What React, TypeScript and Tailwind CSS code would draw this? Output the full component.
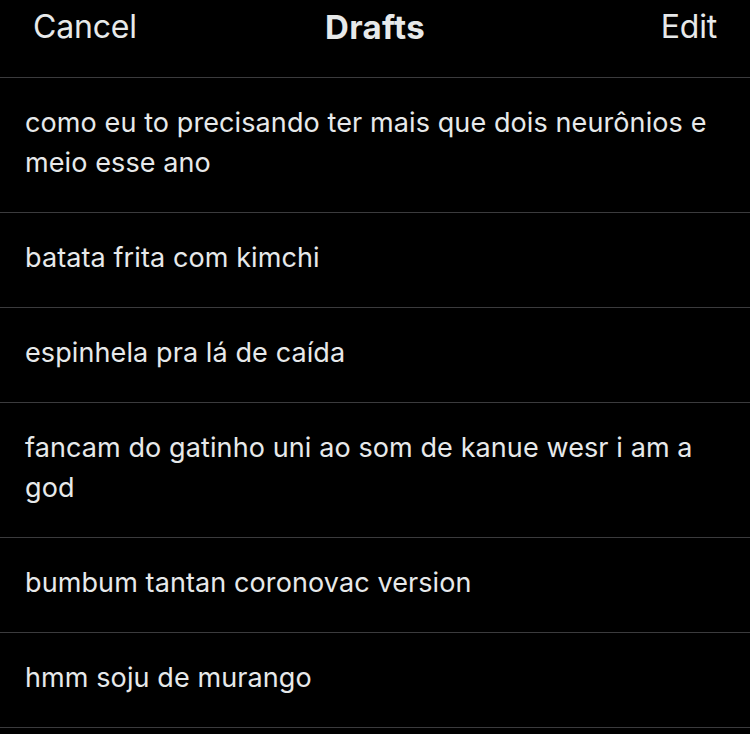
import React from 'react';

const drafts = [
  'como eu to precisando ter mais que dois neurônios e meio esse ano',
  'batata frita com kimchi',
  'espinhela pra lá de caída',
  'fancam do gatinho uni ao som de kanue wesr i am a god',
  'bumbum tantan coronovac version',
  'hmm soju de murango',
];

export default function App() {
  return (
    <div
      className="min-h-[734px] w-[750px] overflow-hidden bg-black text-[#e7e9ea]"
      style={{ fontFamily: 'Inter, "Noto Sans", sans-serif' }}
    >
      {/* Header */}
      <div className="grid h-[78px] grid-cols-3 items-start border-b border-[#3b3b3d] px-[33px] pt-[6px]">
        <span className="text-[32px] leading-[42px] tracking-[-0.2px]">Cancel</span>
        <span className="text-center text-[33px] font-bold leading-[42px] tracking-[0.3px]">Drafts</span>
        <span className="text-right text-[32px] leading-[42px] tracking-[-0.2px]">Edit</span>
      </div>

      {/* Draft list */}
      <ul>
        {drafts.map((text) => (
          <li
            key={text}
            className="border-b border-[#3b3b3d] pb-[29px] pl-[25px] pr-[30px] pt-[25px] text-[27px] leading-[40px] tracking-[0.1px]"
          >
            {text}
          </li>
        ))}
      </ul>
    </div>
  );
}
